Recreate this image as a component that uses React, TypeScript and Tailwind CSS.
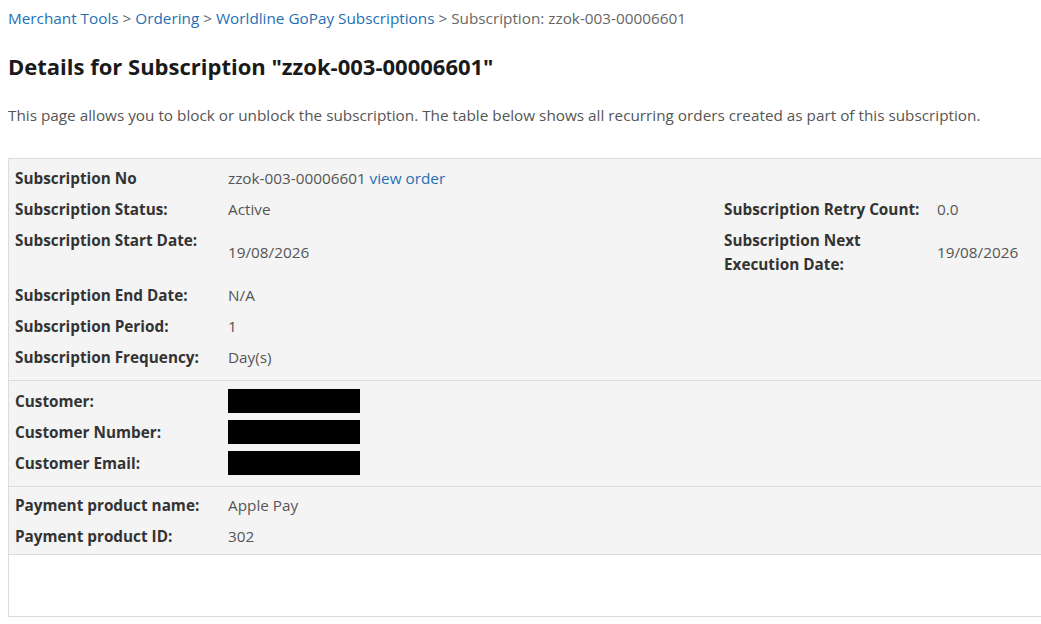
import React from "react";

const font = { fontFamily: '"Open Sans", "Noto Sans", Arial, sans-serif' };

type Row = { label: string; value?: React.ReactNode; redacted?: boolean };

const Label = ({ children }: { children: React.ReactNode }) => (
  <div className="w-[219px] shrink-0 pl-[6px] py-[3.5px] font-bold text-[#333] leading-6 self-start">{children}</div>
);

const Value = ({ children, className = "" }: { children: React.ReactNode; className?: string }) => (
  <div className={`py-[3.5px] leading-6 text-[#555] self-center ${className}`}>{children}</div>
);

const Redacted = () => <div className="h-6 w-[132px] bg-black" />;

const SimpleRow = ({ label, value, redacted }: Row) => (
  <div className="flex">
    <Label>{label}</Label>
    <Value>{redacted ? <Redacted /> : value}</Value>
  </div>
);

export default function App() {
  return (
    <div className="w-screen overflow-hidden bg-white text-[15.3px]" style={font}>
      <div className="w-[1100px] px-2 pt-[7px]">
        <div className="leading-[22px] text-[#666]">
          <a className="text-[#1f6fb2]">Merchant Tools</a> &gt;{" "}
          <a className="text-[#1f6fb2]">Ordering</a> &gt;{" "}
          <a className="text-[#1f6fb2]">Worldline GoPay Subscriptions</a> &gt; Subscription: zzok-003-00006601
        </div>

        <h1 className="mt-[22px] text-[22px] font-bold leading-[30px] text-[#1a1a1a]">
          Details for Subscription "zzok-003-00006601"
        </h1>

        <p className="mt-[22px] leading-6 text-[#555]">
          This page allows you to block or unblock the subscription. The table below shows all recurring orders created as part of this subscription.
        </p>

        <div className="mt-[31px] border border-[#dcdcdc]">
          <div className="bg-[#f4f4f4] pt-[3px] pb-[8px]">
            <div className="flex">
              <Label>Subscription No</Label>
              <Value>
                zzok-003-00006601 <a className="text-[#1f6fb2]">view order</a>
              </Value>
            </div>
            <div className="flex">
              <Label>Subscription Status:</Label>
              <Value className="w-[490px]">Active</Value>
              <Label>Subscription Retry Count:</Label>
              <Value>0.0</Value>
            </div>
            <div className="flex">
              <Label>Subscription Start Date:</Label>
              <Value className="w-[490px]">19/08/2026</Value>
              <Label>
                Subscription Next
                <br />
                Execution Date:
              </Label>
              <Value>19/08/2026</Value>
            </div>
            <SimpleRow label="Subscription End Date:" value="N/A" />
            <SimpleRow label="Subscription Period:" value="1" />
            <SimpleRow label="Subscription Frequency:" value="Day(s)" />
          </div>

          <div className="border-t border-[#dcdcdc] bg-[#f4f4f4] pt-[4px] pb-[8px]">
            <SimpleRow label="Customer:" redacted />
            <SimpleRow label="Customer Number:" redacted />
            <SimpleRow label="Customer Email:" redacted />
          </div>

          <div className="border-t border-[#dcdcdc] bg-[#f4f4f4] pt-[2px] pb-[3px]">
            <SimpleRow label="Payment product name:" value="Apple Pay" />
            <SimpleRow label="Payment product ID:" value="302" />
          </div>

          <div className="h-[62px] border-t border-[#dcdcdc] bg-white" />
        </div>
      </div>
    </div>
  );
}
